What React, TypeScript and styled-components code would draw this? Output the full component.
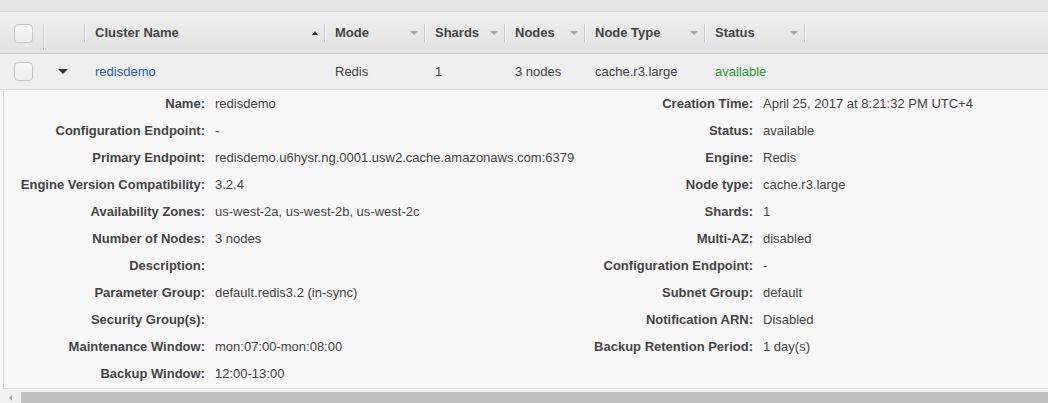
import styled, { createGlobalStyle } from "styled-components";

const GlobalStyle = createGlobalStyle`
  html, body {
    margin: 0;
    padding: 0;
    background: #f7f7f7;
  }
  body {
    font-family: "Liberation Sans", Arial, sans-serif;
    font-size: 13px;
    color: #444;
    overflow: hidden;
  }
`;

const COLS = "44px 41px 240px 100px 80px 80px 120px 100px 1fr";

const Page = styled.div`
  height: 403px;
  overflow: hidden;
  background: #f7f7f7;
`;

const TopStrip = styled.div`
  height: 11px;
  background: #e6e6e6;
  border-bottom: 1px solid #d2d2d2;
`;

const HeaderRow = styled.div`
  display: grid;
  grid-template-columns: ${COLS};
  height: 41px;
  background: linear-gradient(#efefef, #e2e2e2);
  border-bottom: 1px solid #cdcdcd;
`;

const HeaderCell = styled.div`
  display: flex;
  align-items: center;
`;

const HeaderInner = styled.div<{ $tall?: boolean; $pad?: number }>`
  flex: 1;
  height: ${(p) => (p.$tall ? "26px" : "18px")};
  align-self: ${(p) => (p.$tall ? "flex-start" : "center")};
  margin-top: ${(p) => (p.$tall ? "12px" : "0")};
  display: flex;
  align-items: ${(p) => (p.$tall ? "flex-start" : "center")};
  justify-content: space-between;
  padding: 0 6px 0 ${(p) => p.$pad ?? 10}px;
  border-right: 1px solid #c9c9c9;
  box-shadow: 1px 0 0 #f8f8f8;
  font-weight: bold;
  color: #444;
  white-space: nowrap;
`;

const Caret = styled.span<{ $dir: "up" | "down"; $dark?: boolean }>`
  width: 0;
  height: 0;
  border-left: ${(p) => (p.$dark ? 3.5 : 4)}px solid transparent;
  border-right: ${(p) => (p.$dark ? 3.5 : 4)}px solid transparent;
  ${(p) =>
    p.$dir === "up"
      ? `border-bottom: 4px solid ${p.$dark ? "#333" : "#a5a5a5"};`
      : `border-top: 4px solid ${p.$dark ? "#333" : "#a5a5a5"};`}
`;

const RowCaret = styled.span`
  width: 0;
  height: 0;
  border-left: 5px solid transparent;
  border-right: 5px solid transparent;
  border-top: 5px solid #333;
`;

const Checkbox = styled.span`
  box-sizing: border-box;
  width: 19px;
  height: 19px;
  border: 1px solid #c6c6c6;
  border-radius: 4px;
  background: linear-gradient(#f6f6f6, #eeeeee);
`;

const DataRow = styled.div`
  display: grid;
  grid-template-columns: ${COLS};
  height: 35px;
  background: #efefef;
  border-bottom: 1px solid #dcdcdc;
`;

const Cell = styled.div<{ $pad?: number; $color?: string }>`
  display: flex;
  align-items: center;
  padding-left: ${(p) => p.$pad ?? 10}px;
  color: ${(p) => p.$color ?? "#444"};
  white-space: nowrap;
`;

const DetailWrap = styled.div`
  padding-left: 3px;
`;

const DetailPanel = styled.div`
  display: grid;
  grid-template-columns: 548px 1fr;
  border-left: 1px solid #dadada;
  border-bottom: 1px solid #dcdcdc;
  padding-bottom: 1px;
  background: #f7f7f7;
`;

const DetailColumn = styled.div`
  display: grid;
  grid-template-columns: 201px 1fr;
  grid-auto-rows: 27px;
  column-gap: 10px;
  align-items: center;
`;

const Label = styled.div`
  text-align: right;
  font-weight: bold;
  color: #444;
  white-space: nowrap;
`;

const Value = styled.div`
  color: #444;
  white-space: nowrap;
`;

const Gap = styled.div`
  height: 3px;
  background: #f2f2f2;
`;

const Scrollbar = styled.div`
  display: flex;
  height: 17px;
  background: #f1f1f1;
`;

const ScrollArrow = styled.div`
  width: 21px;
  display: flex;
  justify-content: center;
  padding-top: 3px;
  box-sizing: border-box;
  &::before {
    content: "";
    width: 0;
    height: 0;
    border-top: 3px solid transparent;
    border-bottom: 3px solid transparent;
    border-right: 3px solid #a3a3a3;
  }
`;

const ScrollThumb = styled.div`
  flex: 1;
  background: #c1c1c1;
`;

const Link = styled.a`
  color: #1f60b8;
  text-decoration: none;
`;

type Column = { title: string; sort?: boolean };

const columns: Column[] = [
  { title: "Cluster Name", sort: true },
  { title: "Mode" },
  { title: "Shards" },
  { title: "Nodes" },
  { title: "Node Type" },
  { title: "Status" },
];

const leftDetails: [string, string][] = [
  ["Name:", "redisdemo"],
  ["Configuration Endpoint:", "-"],
  ["Primary Endpoint:", "redisdemo.u6hysr.ng.0001.usw2.cache.amazonaws.com:6379"],
  ["Engine Version Compatibility:", "3.2.4"],
  ["Availability Zones:", "us-west-2a, us-west-2b, us-west-2c"],
  ["Number of Nodes:", "3 nodes"],
  ["Description:", ""],
  ["Parameter Group:", "default.redis3.2 (in-sync)"],
  ["Security Group(s):", ""],
  ["Maintenance Window:", "mon:07:00-mon:08:00"],
  ["Backup Window:", "12:00-13:00"],
];

const rightDetails: [string, string][] = [
  ["Creation Time:", "April 25, 2017 at 8:21:32 PM UTC+4"],
  ["Status:", "available"],
  ["Engine:", "Redis"],
  ["Node type:", "cache.r3.large"],
  ["Shards:", "1"],
  ["Multi-AZ:", "disabled"],
  ["Configuration Endpoint:", "-"],
  ["Subnet Group:", "default"],
  ["Notification ARN:", "Disabled"],
  ["Backup Retention Period:", "1 day(s)"],
];

function Details({ items }: { items: [string, string][] }) {
  return (
    <DetailColumn>
      {items.flatMap(([label, value]) => [
        <Label key={label + "-l"}>{label}</Label>,
        <Value key={label + "-v"}>{value}</Value>,
      ])}
    </DetailColumn>
  );
}

export default function App() {
  return (
    <Page>
      <GlobalStyle />
      <TopStrip />
      <HeaderRow>
        <HeaderCell>
          <HeaderInner $tall $pad={14}>
            <Checkbox />
          </HeaderInner>
        </HeaderCell>
        <HeaderCell>
          <HeaderInner />
        </HeaderCell>
        {columns.map((c) => (
          <HeaderCell key={c.title}>
            <HeaderInner>
              <span>{c.title}</span>
              {c.sort ? <Caret $dir="up" $dark /> : <Caret $dir="down" />}
            </HeaderInner>
          </HeaderCell>
        ))}
        <HeaderCell />
      </HeaderRow>
      <DataRow>
        <Cell $pad={14}>
          <Checkbox />
        </Cell>
        <Cell $pad={14}>
          <RowCaret />
        </Cell>
        <Cell>
          <Link href="#">redisdemo</Link>
        </Cell>
        <Cell>Redis</Cell>
        <Cell>1</Cell>
        <Cell>3 nodes</Cell>
        <Cell>cache.r3.large</Cell>
        <Cell $color="#2d9a3c">available</Cell>
        <Cell />
      </DataRow>
      <DetailWrap>
        <DetailPanel>
          <Details items={leftDetails} />
          <Details items={rightDetails} />
        </DetailPanel>
      </DetailWrap>
      <Gap />
      <Scrollbar>
        <ScrollArrow />
        <ScrollThumb />
      </Scrollbar>
    </Page>
  );
}
